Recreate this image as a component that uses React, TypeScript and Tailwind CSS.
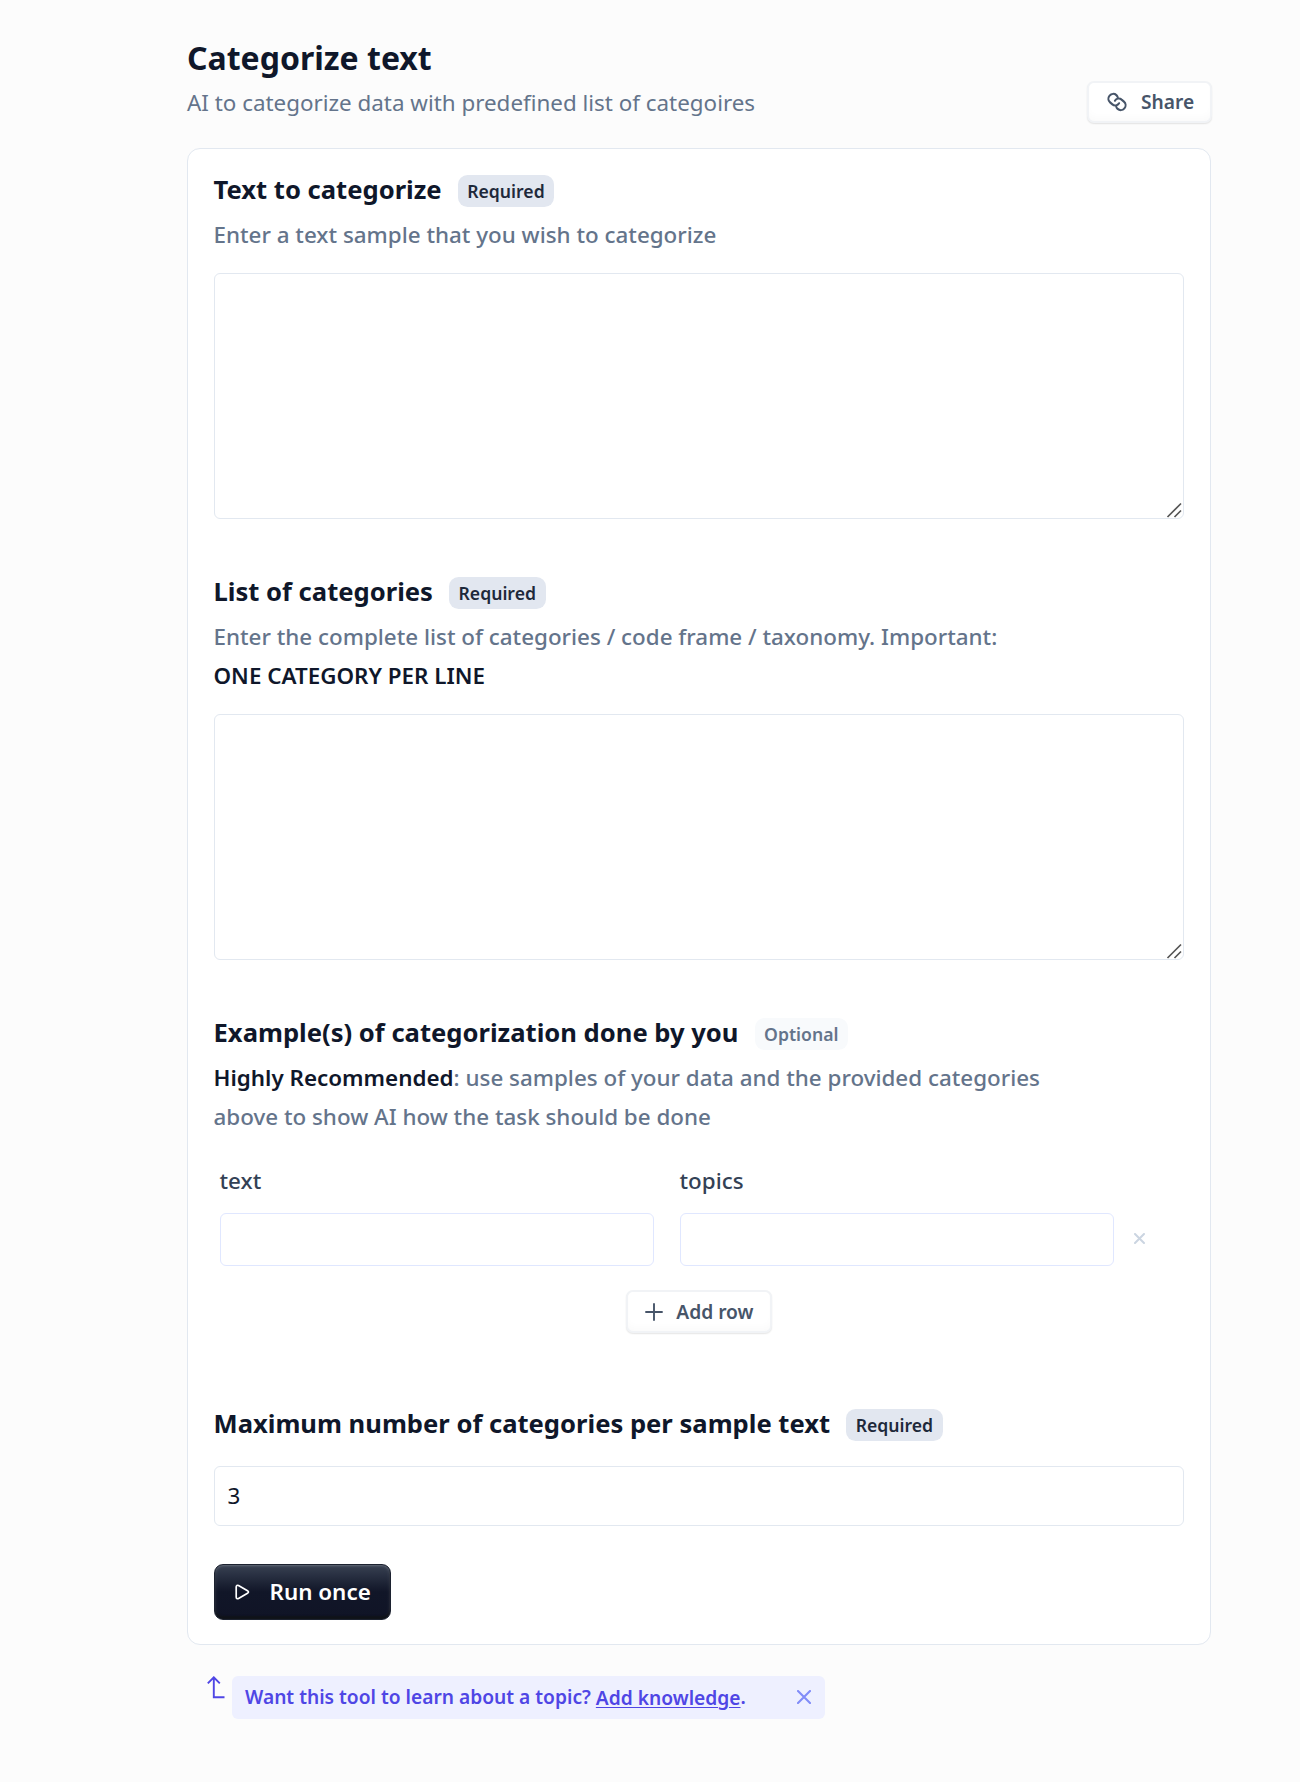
import type { ReactNode } from "react";

function Badge({ optional = false }: { optional?: boolean }) {
  return (
    <span
      className={`mt-px flex h-8 items-center rounded-[9.6px] px-[9.6px] text-[17.6px] font-semibold ${
        optional ? "bg-[#f8fafc] text-[#64748b]" : "bg-[#e2e7f0] text-[#1e293b]"
      }`}
    >
      {optional ? "Optional" : "Required"}
    </span>
  );
}

function Heading({ title, optional }: { title: string; optional?: boolean }) {
  return (
    <div className="flex h-8 items-start gap-4">
      <h2 className="text-[25.6px] leading-8 font-bold text-[#0f172a]">{title}</h2>
      <Badge optional={optional} />
    </div>
  );
}

function Description({ children }: { children: ReactNode }) {
  return (
    <p className="mt-[9px] w-[860px] text-[22.4px] leading-[39px] font-medium text-[#64748b]">
      {children}
    </p>
  );
}

function TextArea() {
  return (
    <div className="relative h-[246px]">
      <textarea className="block h-full w-full resize-none rounded-md border border-slate-200 bg-white p-3 outline-none" />
      <svg
        className="pointer-events-none absolute right-0.5 bottom-px h-4 w-4"
        viewBox="0 0 16 16"
        stroke="#555"
        strokeWidth="1.7"
        fill="none"
      >
        <path d="M1.5 15 15 1.5M8.5 15 15 8.5" />
      </svg>
    </div>
  );
}

const lightButton =
  "flex items-center rounded-[7px] border-2 border-[#f1f3f6] bg-white text-[19.2px] font-semibold text-[#475569] shadow-[0_1px_1.5px_rgba(0,0,0,0.1),inset_0_-6px_8px_-3px_rgba(0,0,0,0.025)]";

function Column({ label }: { label: string }) {
  return (
    <div className="w-[434px]">
      <label className="block text-[22.4px] leading-[38px] font-medium text-[#334155]">{label}</label>
      <input className="mt-[13px] block h-[53px] w-full rounded-md border border-indigo-100 bg-white px-3 outline-none" />
    </div>
  );
}

export default function App() {
  return (
    <main className="min-h-[1782px] bg-[#fcfcfc] pt-[38px] pl-[187px] font-['Noto_Sans',sans-serif]">
      <div className="w-[1025px]">
        <header className="flex h-[110px] items-start justify-between">
          <div>
            <h1 className="text-[32px] leading-10 font-bold text-[#0f172a]">Categorize text</h1>
            <p className="mt-1.5 text-[22.4px] leading-[38px] text-[#64748b]">
              AI to categorize data with predefined list of categoires
            </p>
          </div>
          <button className={`${lightButton} mt-[43px] h-[42px] w-[125px] pl-[17px]`}>
            <svg
              className="mr-[13px] h-[22px] w-[22px]"
              viewBox="-11 -11 22 22"
              fill="none"
              stroke="currentColor"
              strokeWidth="2.1"
              strokeLinecap="round"
              strokeLinejoin="round"
            >
              <g transform="rotate(41)">
                <path d="M-2.6-4.1A4.8 4.8 0 0 0-5-4.8A4.8 4.8 0 0 0-5 4.8H-1.9A4.3 4.3 0 0 0 2.4-.4" />
                <path d="M2.6 4.1A4.8 4.8 0 0 0 5 4.8A4.8 4.8 0 0 0 5-4.8H1.9A4.3 4.3 0 0 0-2.4.4" />
              </g>
            </svg>
            Share
          </button>
        </header>

        <section className="h-[1497px] w-[1024px] rounded-[13px] border border-slate-200 bg-white pt-[25px] pr-[26px] pl-[25.5px]">
          <Heading title="Text to categorize" />
          <Description>Enter a text sample that you wish to categorize</Description>
          <div className="pt-[19px]">
            <TextArea />
          </div>

          <div className="pt-[57px]">
            <Heading title="List of categories" />
            <Description>
              Enter the complete list of categories / code frame / taxonomy. Important:
              <strong className="block font-semibold text-[#0f172a]">ONE CATEGORY PER LINE</strong>
            </Description>
            <div className="pt-[19px]">
              <TextArea />
            </div>
          </div>

          <div className="pt-[57px]">
            <Heading title="Example(s) of categorization done by you" optional />
            <Description>
              <strong className="font-semibold text-[#0f172a]">Highly Recommended</strong>: use samples of
              your data and the provided categories above to show AI how the task should be done
            </Description>
            <div className="mt-[26px] flex gap-[26px] pl-1.5">
              <Column label="text" />
              <Column label="topics" />
              <button className="mt-[71px] -ml-1.5 h-[11px] w-[11px] text-[#cbd5e1]">
                <svg className="block h-full w-full" viewBox="0 0 11 11" stroke="currentColor" strokeWidth="2" strokeLinecap="round">
                  <path d="m1 1 9 9m0-9-9 9" />
                </svg>
              </button>
            </div>
            <button className={`${lightButton} mx-auto mt-6 h-[43px] w-[146px] pt-0.5 pl-[17px]`}>
              <svg className="-mt-0.5 mr-[13.5px] h-[18px] w-[18px]" viewBox="0 0 18 18" stroke="currentColor" strokeWidth="1.9" strokeLinecap="round">
                <path d="M9 1v16M1 9h16" />
              </svg>
              Add row
            </button>
          </div>

          <div className="pt-[75px]">
            <Heading title="Maximum number of categories per sample text" />
            <input
              defaultValue="3"
              className="mt-[26px] block h-[60px] w-full rounded-md border border-slate-200 bg-white px-[13px] pb-0.5 text-[22.4px] text-[#0f172a] outline-none"
            />
          </div>

          <button className="mt-[37.5px] flex h-14 w-[177.5px] items-center rounded-[9px] border border-[#1c2230] bg-linear-to-b from-[#384152] via-[#111628] via-50% to-[#101426] pt-px pl-5 text-[22.4px] font-semibold text-white shadow-[inset_0_1px_2px_rgba(255,255,255,0.15),inset_0_-3px_2px_#0f1218,inset_0_0_4px_rgba(255,255,255,0.12)]">
            <svg className="mr-5 h-4 w-[15px]" viewBox="0 0 15 16" fill="none" stroke="currentColor" strokeWidth="1.7" strokeLinejoin="round">
              <path d="M1.2 3v10c0 1.6 1.1 2.1 2.3 1.5l9-5.3c1.3-.8 1.3-1.6 0-2.4l-9-5.3C2.3.9 1.2 1.4 1.2 3Z" />
            </svg>
            Run once
          </button>
        </section>

        <aside className="flex pt-[31px] pl-5">
          <svg className="mr-[7px] h-[23px] w-[18px]" viewBox="0 0 18 23" fill="none" stroke="#4f46e5" strokeWidth="1.9">
            <path d="M6.8 1v20.2H17.5M.8 7.3l6-6 6 6" />
          </svg>
          <div className="flex h-[43px] w-[593px] items-center justify-between rounded-md bg-[#eef0ff] pr-3.5 pl-[13px] text-[19.2px] font-semibold text-[#4f46e5]">
            <p className="-mt-px">
              Want this tool to learn about a topic?{" "}
              <a className="relative top-px underline decoration-1 underline-offset-2">Add knowledge</a>.
            </p>
            <svg className="-mt-px h-3.5 w-3.5" viewBox="0 0 14 14" stroke="#818cf8" strokeWidth="2.1" strokeLinecap="round">
              <path d="m1 1 12 12M13 1 1 13" />
            </svg>
          </div>
        </aside>
      </div>
    </main>
  );
}
